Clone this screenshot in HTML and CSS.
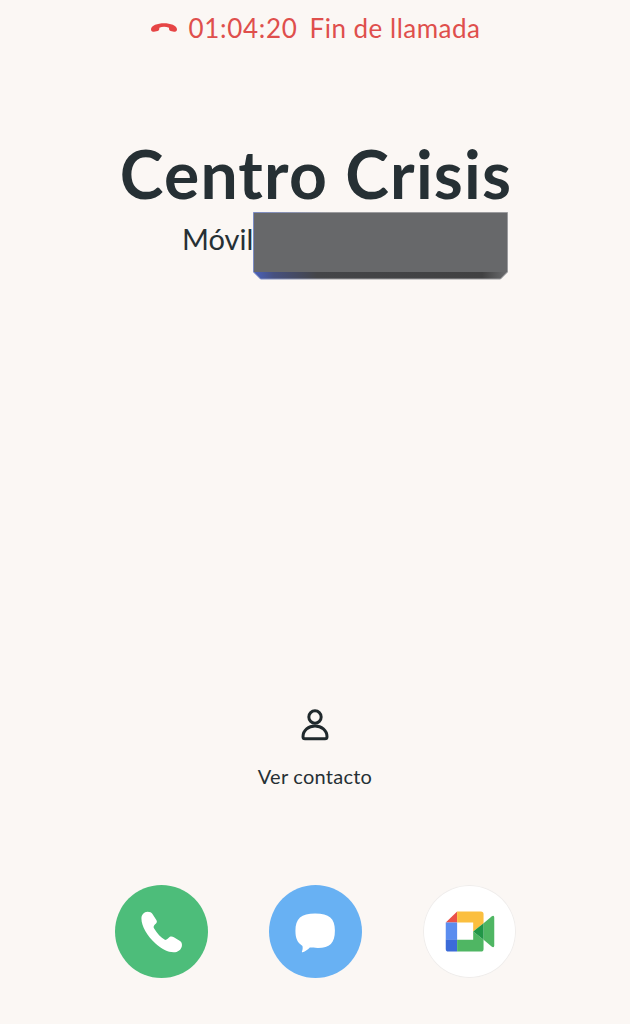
FILE: index.html
```html
<!DOCTYPE html>
<html lang="es">
<head>
    <meta charset="UTF-8">
    <title>Fin de llamada</title>
    <link rel="stylesheet" href="styles.css">
</head>
<body>
    <div class="status">
        <svg class="hangup" viewBox="0 0 78 27">
            <path d="M39 1C58 1 78 8 78 19C78 25 75 27 69 26L59 24C54 23 54 18 54 14C44 10 34 10 25 14C25 18 25 23 20 24L9 26C3 27 0 25 0 19C0 8 20 1 39 1Z"/>
        </svg>
        <span class="time">01:04:20</span>
        <span class="state">Fin de llamada</span>
    </div>
    <h1>Centro Crisis</h1>
    <div class="number">
        <span class="type">Móvil</span>
        <svg class="cover" viewBox="0 0 255 68">
            <defs>
                <linearGradient id="edge">
                    <stop offset="0" stop-color="#4a62bd"/>
                    <stop offset=".08" stop-color="#46507f"/>
                    <stop offset=".25" stop-color="#444548"/>
                    <stop offset=".9" stop-color="#414142"/>
                    <stop offset="1" stop-color="#6c6d6f"/>
                </linearGradient>
                <linearGradient id="line">
                    <stop offset="0" stop-color="#7c8cc4"/>
                    <stop offset=".3" stop-color="#9b9b9e"/>
                </linearGradient>
            </defs>
            <path d="M.5 .5H254.5V60L247.500 67H7.500L.5 60Z" fill="url(#edge)" stroke="url(#line)"/>
            <path d="M1 1H254V60H1Z" fill="#67686a"/>
        </svg>
    </div>

    <div class="contact">
        <svg viewBox="0 0 84 96">
            <circle cx="42" cy="24" r="18.500"/>
            <path d="M12 89H72C76 89 78 87 78 83C78 64 61 51 42 51C23 51 6 64 6 83C6 87 8 89 12 89Z"/>
        </svg>
        <span>Ver contacto</span>
    </div>

    <div class="actions">
        <div class="btn call">
            <svg viewBox="0 0 278 278">
                <path fill="#fff" d="M79 100C79 88 87 81 97 80C105 80 109 82 112 87L124 105C127 110 124 114 120 117C116 121 114 125 117 130C126 145 137 157 149 164C155 165 159 159 164 155C168 153 172 154 176 156L192 166C199 170 201 175 200 182C198 193 188 201 175 201C158 201 140 192 121 175C96 152 79 123 79 100Z"/>
            </svg>
        </div>
        <div class="btn message">
            <svg viewBox="0 0 278 278">
                <path fill="#fff" d="M138 85C180 85 197 100 197 136C197 174 182 188 146 188C136 188 128 187 122 187C117 193 108 199 101 201C98 201 98 199 99 197C101 192 101 187 100 182C85 173 79 160 79 137C79 100 96 85 138 85Z"/>
            </svg>
        </div>
        <div class="btn meet">
            <svg viewBox="0 0 278 278">
                <path fill="#ea5149" d="M68 112L102 79V112Z"/>
                <path fill="#5b8def" d="M68 112H102V164H68Z"/>
                <path fill="#3b6bd8" d="M68 164H102V199H76Q68 199 68 191Z"/>
                <path fill="#fbbf3f" d="M102 79H173Q181 79 181 87V114L150 139V112H102Z"/>
                <path fill="#4fb663" d="M102 164H150V139L181 164V191Q181 199 173 199H102Z"/>
                <path fill="#4fb663" d="M181 114L205 94Q213 89 213 98V180Q213 189 205 184L181 164Z"/>
                <path fill="#219647" d="M150 139L181 114V164Z"/>
            </svg>
        </div>
    </div>
</body>
</html>
```

FILE: styles.css
```css
* {
    margin: 0;
    padding: 0;
    box-sizing: border-box;
}
body {
    height: 1024px;
    background-color: #fbf7f4;
    color: #263034;
    font-family: Lato, "Liberation Sans", sans-serif;
    display: flex;
    flex-direction: column;
    align-items: center;
    overflow: hidden;
}
svg {
    display: block;
}
.status {
    display: flex;
    align-items: center;
    height: 56px;
    width: 329px;
    color: #df4f4c;
    font-size: 26px;
    white-space: nowrap;
}
.hangup {
    width: 26px;
    height: 9px;
    flex-shrink: 0;
    margin: 0 12px 2px 0;
    fill: #e64545;
}
.time {
    width: 121px;
    flex-shrink: 0;
    letter-spacing: .7px;
}
.state {
    letter-spacing: .5px;
}
h1 {
    height: 80px;
    margin-top: 78px;
    padding-left: 2px;
    line-height: 80px;
    font-size: 66px;
    font-weight: 700;
    letter-spacing: 1.2px;
    white-space: nowrap;
}
.number {
    display: flex;
    width: 326px;
    height: 68px;
    margin-top: -2px;
    margin-left: 60px;
}
.type {
    width: 71px;
    flex-shrink: 0;
    line-height: 53px;
    font-size: 29px;
    white-space: nowrap;
}
.cover {
    width: 255px;
    height: 68px;
    flex-shrink: 0;
}
.contact {
    margin-top: 429px;
    display: flex;
    flex-direction: column;
    align-items: center;
    font-size: 20px;
    line-height: 24px;
    letter-spacing: .25px;
}
.contact svg {
    width: 28px;
    height: 32px;
    margin-bottom: 23px;
    fill: none;
    stroke: #20292c;
    stroke-width: 9;
}
.actions {
    display: flex;
    gap: 61px;
    margin-top: 97px;
}
.btn {
    width: 93px;
    height: 93px;
    border-radius: 50%;
}
.call {
    background-color: #4dbd7a;
}
.message {
    background-color: #68b1f3;
}
.meet {
    background-color: #fff;
    box-shadow: inset 0 0 0 1px #f0edeb;
}
```
